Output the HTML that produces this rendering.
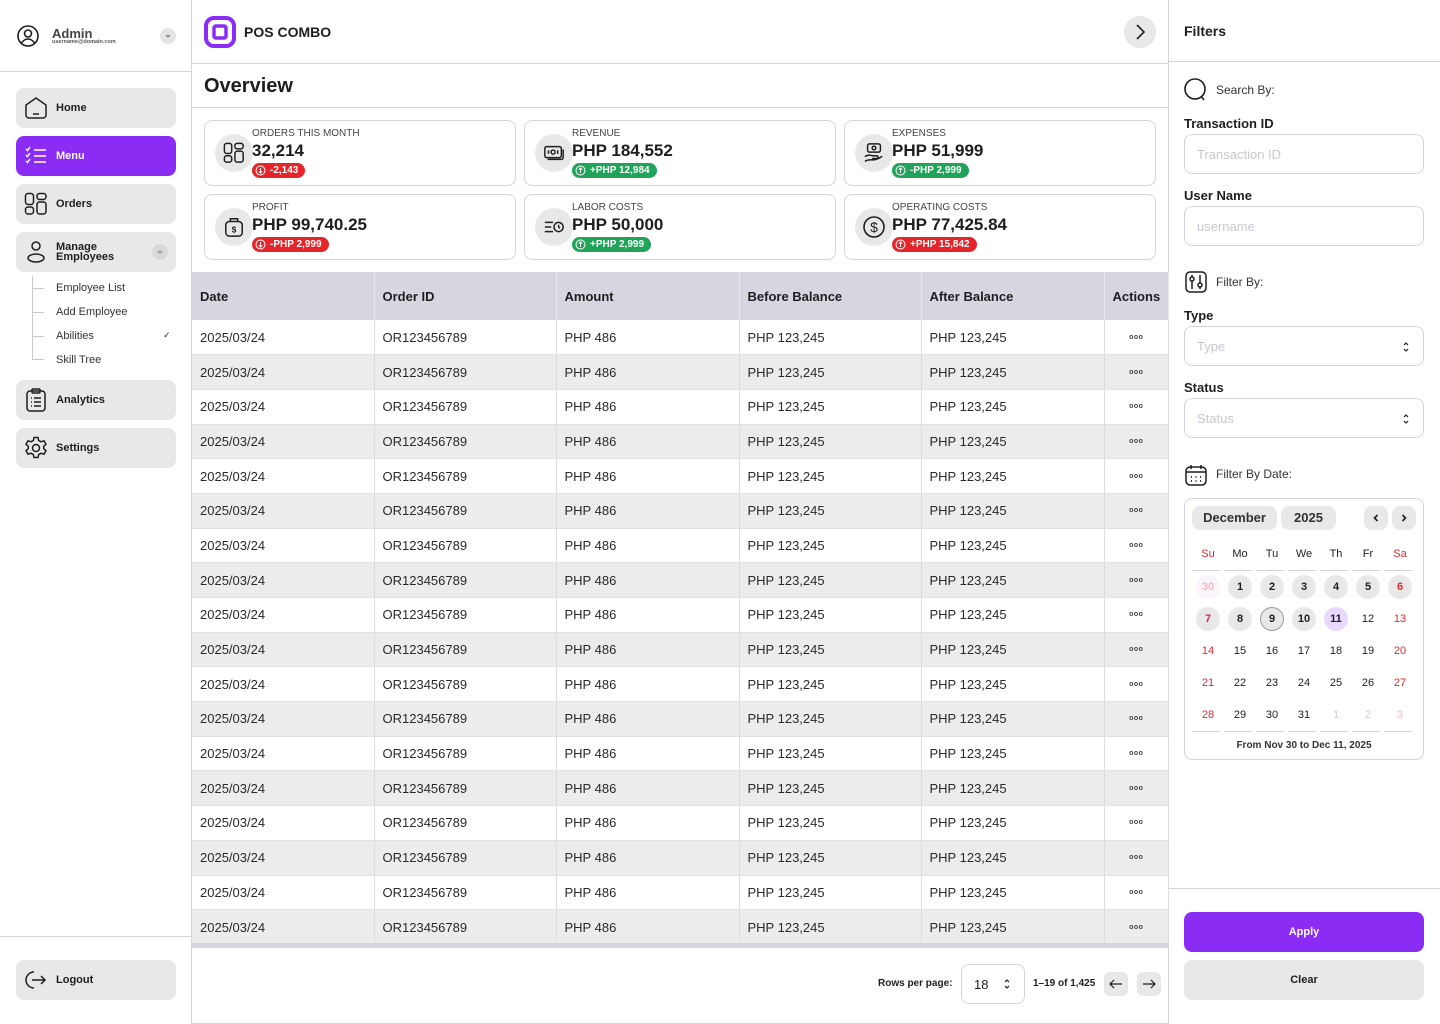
<!DOCTYPE html>
<html><head><meta charset="utf-8"><style>
*{box-sizing:border-box;margin:0;padding:0}
body{width:1440px;height:1024px;position:relative;background:#fff;font-family:"Liberation Sans",Arial,sans-serif;color:#1e1e1e;overflow:hidden}
.a{position:absolute}
.nav{position:absolute;left:16px;width:160px;height:40px;border-radius:8px;background:#e8e8e8;font-size:11px;font-weight:bold;display:flex;align-items:center;padding-left:40px}
.nav svg{position:absolute;left:8px;top:8px}
.sub{position:absolute;left:56px;font-size:11px;color:#333}
.card{position:absolute;width:312px;height:66px;border:1px solid #d4d4dc;border-radius:8px}
.card .ic{position:absolute;left:10px;top:13px;width:38px;height:38px;border-radius:50%;background:#e8e8e8;display:flex;align-items:center;justify-content:center}
.card .l{position:absolute;left:47px;top:7px;font-size:10px;color:#444}
.card .v{position:absolute;left:47px;top:20px;font-size:17px;font-weight:bold;color:#1e1e1e}
.card .b{position:absolute;left:47px;top:42px;height:15px;border-radius:8px;color:#fff;font-size:10px;font-weight:bold;padding:0 7px 0 18px;line-height:15px}
.card .b svg{position:absolute;left:3px;top:2px}
.r{background:#e5252a}.g{background:#1fa45a}
table{position:absolute;left:192px;top:272px;width:977px;border-collapse:collapse;font-size:13px}
th{background:#d6d6e0;height:48px;text-align:left;padding-left:8px;font-weight:bold;border-right:1px solid #e6e6ec}
td{height:34.7px;padding-left:8px;border-right:1px solid #dcdce2;border-bottom:1px solid #e0e0e6;color:#2a2a2a}
tr:nth-child(odd) td{background:#ececec}
td:last-child{text-align:center;padding:0;font-size:7px;letter-spacing:0.5px;font-weight:bold;color:#444}
.lab{position:absolute;left:1184px;font-size:13px;font-weight:bold}
.inp{position:absolute;left:1184px;width:240px;height:40px;border:1px solid #d4d4dc;border-radius:8px;font-size:13px;color:#c8c8d0;padding:12px 12px}
.inp svg{position:absolute;right:12px;top:13px}
.cal div{position:absolute;width:24px;height:24px;border-radius:50%;text-align:center;line-height:24px;font-size:11px;font-weight:bold}
</style></head><body>
<div class="a" style="left:191px;top:0;width:1px;height:1024px;background:#d4d4dc"></div>
<svg class="a" style="left:17px;top:25px" width="22" height="22" viewBox="0 0 22 22" fill="none" stroke="#1e1e1e" stroke-width="1.6"><circle cx="11" cy="11" r="10"/><circle cx="11" cy="8.5" r="3.5"/><path d="M4.5 18c2-3 4-4 6.5-4s4.5 1 6.5 4"/></svg>
<div class="a" style="left:52px;top:26px;font-size:13px;font-weight:bold;color:#444">Admin</div>
<div class="a" style="left:52px;top:39px;font-size:5.5px;font-weight:bold;color:#555">username@domain.com</div>
<div class="a" style="left:160px;top:28px;width:16px;height:16px;border-radius:50%;background:#e4e4e4"><svg width="16" height="16" viewBox="0 0 16 16" fill="none" stroke="#666" stroke-width="1"><path d="M6 7l2 2 2-2"/></svg></div>
<div class="a" style="left:0;top:71px;width:191px;height:1px;background:#d4d4dc"></div>
<div class="nav" style="top:88px"><svg width="24" height="24" viewBox="0 0 24 24" fill="none" stroke="#1e1e1e" stroke-width="1.5"><path d="M2 9L12 2l10 7v10a3 3 0 0 1-3 3H5a3 3 0 0 1-3-3z"/><path d="M9 18h6"/></svg>Home</div>
<div class="nav" style="top:136px;background:#8b2cf5;color:#fff"><svg width="24" height="24" viewBox="0 0 24 24" fill="none" stroke="#fff" stroke-width="1.5"><path d="M2 5l1.5 1.5L6 3M2 11l1.5 1.5L6 9M2 17l1.5 1.5L6 15M10 6h12M10 12h12M10 18h12"/></svg>Menu</div>
<div class="nav" style="top:184px"><svg width="24" height="24" viewBox="0 0 24 24" fill="none" stroke="#1e1e1e" stroke-width="1.5"><rect x="1.5" y="1.5" width="8" height="11" rx="2.5"/><rect x="1.5" y="15" width="8" height="7" rx="2.5"/><rect x="13" y="1.5" width="9" height="6" rx="2.5"/><rect x="13" y="10" width="9" height="12" rx="2.5"/></svg>Orders</div>
<div class="nav" style="top:232px;line-height:10px">
<svg width="24" height="24" viewBox="0 0 24 24" fill="none" stroke="#1e1e1e" stroke-width="1.5"><circle cx="12" cy="6" r="4"/><ellipse cx="12" cy="18" rx="8" ry="4"/></svg>Manage<br>Employees
<div class="a" style="left:136px;top:12px;width:16px;height:16px;border-radius:50%;background:#d8d8d8"><svg style="left:0;top:0" width="16" height="16" viewBox="0 0 16 16" fill="none" stroke="#777" stroke-width="1"><path d="M6 9l2-2 2 2"/></svg></div></div>
<div class="a" style="left:32px;top:276px;width:1px;height:84px;background:#c8c8d0"></div>
<div class="a" style="left:32px;top:288px;width:12px;height:1px;background:#c8c8d0"></div>
<div class="a" style="left:32px;top:312px;width:12px;height:1px;background:#c8c8d0"></div>
<div class="a" style="left:32px;top:336px;width:12px;height:1px;background:#c8c8d0"></div>
<div class="a" style="left:32px;top:359px;width:12px;height:1px;background:#c8c8d0"></div>
<div class="sub" style="top:282px">Employee List</div>
<div class="sub" style="top:306px">Add Employee</div>
<div class="sub" style="top:330px">Abilities</div>
<div class="a" style="left:163px;top:330px;font-size:9px">✓</div>
<div class="sub" style="top:354px">Skill Tree</div>
<div class="nav" style="top:380px"><svg width="24" height="24" viewBox="0 0 24 24" fill="none" stroke="#1e1e1e" stroke-width="1.5"><rect x="3" y="3" width="18" height="20" rx="3"/><rect x="8" y="1" width="8" height="4" rx="1"/><path d="M7 10h1M7 14h1M7 18h1M10 10h7M10 14h7M10 18h7"/></svg>Analytics</div>
<div class="nav" style="top:428px"><svg width="24" height="24" viewBox="0 0 24 24" fill="none" stroke="#1e1e1e" stroke-width="1.5"><circle cx="12" cy="12" r="3.5"/><path d="M10 1.5h4l.7 3 2.3 1.3 3-1 2 3.5-2.3 2v2.4l2.3 2-2 3.5-3-1-2.3 1.3-.7 3h-4l-.7-3-2.3-1.3-3 1-2-3.5 2.3-2v-2.4l-2.3-2 2-3.5 3 1 2.3-1.3z"/></svg>Settings</div>
<div class="a" style="left:0;top:936px;width:191px;height:1px;background:#d4d4dc"></div>
<div class="nav" style="top:960px;font-weight:bold"><svg width="24" height="24" viewBox="0 0 24 24" fill="none" stroke="#1e1e1e" stroke-width="1.5"><path d="M10 4a8 8 0 1 0 0 16"/><path d="M8 12h13M17 8l4 4-4 4"/></svg>Logout</div>

<svg class="a" style="left:204px;top:16px" width="32" height="32" viewBox="0 0 32 32"><rect x="2" y="2" width="28" height="28" rx="8" fill="none" stroke="#8b2cf5" stroke-width="4"/><rect x="10" y="10" width="12" height="12" rx="2" fill="none" stroke="#8b2cf5" stroke-width="3.5"/></svg>
<div class="a" style="left:244px;top:24px;font-size:14px;font-weight:bold">POS COMBO</div>
<div class="a" style="left:1124px;top:16px;width:32px;height:32px;border-radius:50%;background:#e8e8e8"><svg width="32" height="32" viewBox="0 0 32 32" fill="none" stroke="#1e1e1e" stroke-width="1.6"><path d="M13 9l7 7-7 7"/></svg></div>
<div class="a" style="left:192px;top:63px;width:977px;height:1px;background:#d4d4dc"></div>
<div class="a" style="left:204px;top:75px;font-size:20px;font-weight:bold">Overview</div>
<div class="a" style="left:192px;top:107px;width:977px;height:1px;background:#d4d4dc"></div>
<div class="a" style="left:1168px;top:0;width:1px;height:1024px;background:#d4d4dc"></div>

<div class="card" style="left:204px;top:120px"><div class="ic"><svg width="22" height="22" viewBox="0 0 24 24" fill="none" stroke="#1e1e1e" stroke-width="1.6"><rect x="1.5" y="1.5" width="8" height="11" rx="2.5"/><rect x="1.5" y="15" width="8" height="7" rx="2.5"/><rect x="13" y="1.5" width="9" height="6" rx="2.5"/><rect x="13" y="10" width="9" height="12" rx="2.5"/></svg></div><div class="l">ORDERS THIS MONTH</div><div class="v">32,214</div><div class="b r"><svg width="11" height="11" viewBox="0 0 11 11" fill="none" stroke="#fff" stroke-width="1"><circle cx="5.5" cy="5.5" r="4.5"/><path d="M5.5 3v5M3.8 6.3l1.7 1.7 1.7-1.7"/></svg>-2,143</div></div>
<div class="card" style="left:524px;top:120px"><div class="ic"><svg width="22" height="22" viewBox="0 0 24 24" fill="none" stroke="#1e1e1e" stroke-width="1.6"><rect x="2" y="5" width="18" height="12" rx="2"/><path d="M5 19h15a2 2 0 0 0 2-2V8"/><circle cx="11" cy="11" r="2.2"/><path d="M6 9v4M16 9v4"/></svg></div><div class="l">REVENUE</div><div class="v">PHP 184,552</div><div class="b g"><svg width="11" height="11" viewBox="0 0 11 11" fill="none" stroke="#fff" stroke-width="1"><circle cx="5.5" cy="5.5" r="4.5"/><path d="M5.5 8V3M3.8 4.7l1.7-1.7 1.7 1.7"/></svg>+PHP 12,984</div></div>
<div class="card" style="left:844px;top:120px"><div class="ic"><svg width="22" height="22" viewBox="0 0 24 24" fill="none" stroke="#1e1e1e" stroke-width="1.6"><rect x="5" y="2" width="14" height="9" rx="2"/><circle cx="12" cy="6.5" r="2"/><path d="M2 16c3-2 6-2 8-1h5a1.5 1.5 0 0 1 0 3H10M2 21c3-1.5 5-2 8-1.5 4 .5 7-1 11-4"/></svg></div><div class="l">EXPENSES</div><div class="v">PHP 51,999</div><div class="b g"><svg width="11" height="11" viewBox="0 0 11 11" fill="none" stroke="#fff" stroke-width="1"><circle cx="5.5" cy="5.5" r="4.5"/><path d="M5.5 8V3M3.8 4.7l1.7-1.7 1.7 1.7"/></svg>-PHP 2,999</div></div>
<div class="card" style="left:204px;top:194px"><div class="ic"><svg width="22" height="22" viewBox="0 0 24 24" fill="none" stroke="#1e1e1e" stroke-width="1.6"><rect x="3" y="6" width="18" height="16" rx="4"/><path d="M8 6V3h8v3"/><text x="12" y="18" font-size="9" text-anchor="middle" fill="#1e1e1e" stroke="none" font-family="Liberation Sans" font-weight="bold">$</text></svg></div><div class="l">PROFIT</div><div class="v">PHP 99,740.25</div><div class="b r"><svg width="11" height="11" viewBox="0 0 11 11" fill="none" stroke="#fff" stroke-width="1"><circle cx="5.5" cy="5.5" r="4.5"/><path d="M5.5 3v5M3.8 6.3l1.7 1.7 1.7-1.7"/></svg>-PHP 2,999</div></div>
<div class="card" style="left:524px;top:194px"><div class="ic"><svg width="22" height="22" viewBox="0 0 24 24" fill="none" stroke="#1e1e1e" stroke-width="1.6"><path d="M2 7h9M2 12h7M2 17h9"/><circle cx="17" cy="12" r="5"/><path d="M17 9.5V12l1.5 1.5"/></svg></div><div class="l">LABOR COSTS</div><div class="v">PHP 50,000</div><div class="b g"><svg width="11" height="11" viewBox="0 0 11 11" fill="none" stroke="#fff" stroke-width="1"><circle cx="5.5" cy="5.5" r="4.5"/><path d="M5.5 8V3M3.8 4.7l1.7-1.7 1.7 1.7"/></svg>+PHP 2,999</div></div>
<div class="card" style="left:844px;top:194px"><div class="ic"><svg width="24" height="24" viewBox="0 0 24 24" fill="none" stroke="#1e1e1e" stroke-width="1.6"><circle cx="12" cy="12" r="10"/><text x="12" y="17" font-size="14" text-anchor="middle" fill="#1e1e1e" stroke="none" font-family="Liberation Sans">$</text></svg></div><div class="l">OPERATING COSTS</div><div class="v">PHP 77,425.84</div><div class="b r"><svg width="11" height="11" viewBox="0 0 11 11" fill="none" stroke="#fff" stroke-width="1"><circle cx="5.5" cy="5.5" r="4.5"/><path d="M5.5 8V3M3.8 4.7l1.7-1.7 1.7 1.7"/></svg>+PHP 15,842</div></div>

<table>
<tr><th style="width:182px">Date</th><th style="width:182px">Order ID</th><th style="width:183px">Amount</th><th style="width:182px">Before Balance</th><th style="width:183px">After Balance</th><th>Actions</th></tr>
<tr><td>2025/03/24</td><td>OR123456789</td><td>PHP 486</td><td>PHP 123,245</td><td>PHP 123,245</td><td>ooo</td></tr>
<tr><td>2025/03/24</td><td>OR123456789</td><td>PHP 486</td><td>PHP 123,245</td><td>PHP 123,245</td><td>ooo</td></tr>
<tr><td>2025/03/24</td><td>OR123456789</td><td>PHP 486</td><td>PHP 123,245</td><td>PHP 123,245</td><td>ooo</td></tr>
<tr><td>2025/03/24</td><td>OR123456789</td><td>PHP 486</td><td>PHP 123,245</td><td>PHP 123,245</td><td>ooo</td></tr>
<tr><td>2025/03/24</td><td>OR123456789</td><td>PHP 486</td><td>PHP 123,245</td><td>PHP 123,245</td><td>ooo</td></tr>
<tr><td>2025/03/24</td><td>OR123456789</td><td>PHP 486</td><td>PHP 123,245</td><td>PHP 123,245</td><td>ooo</td></tr>
<tr><td>2025/03/24</td><td>OR123456789</td><td>PHP 486</td><td>PHP 123,245</td><td>PHP 123,245</td><td>ooo</td></tr>
<tr><td>2025/03/24</td><td>OR123456789</td><td>PHP 486</td><td>PHP 123,245</td><td>PHP 123,245</td><td>ooo</td></tr>
<tr><td>2025/03/24</td><td>OR123456789</td><td>PHP 486</td><td>PHP 123,245</td><td>PHP 123,245</td><td>ooo</td></tr>
<tr><td>2025/03/24</td><td>OR123456789</td><td>PHP 486</td><td>PHP 123,245</td><td>PHP 123,245</td><td>ooo</td></tr>
<tr><td>2025/03/24</td><td>OR123456789</td><td>PHP 486</td><td>PHP 123,245</td><td>PHP 123,245</td><td>ooo</td></tr>
<tr><td>2025/03/24</td><td>OR123456789</td><td>PHP 486</td><td>PHP 123,245</td><td>PHP 123,245</td><td>ooo</td></tr>
<tr><td>2025/03/24</td><td>OR123456789</td><td>PHP 486</td><td>PHP 123,245</td><td>PHP 123,245</td><td>ooo</td></tr>
<tr><td>2025/03/24</td><td>OR123456789</td><td>PHP 486</td><td>PHP 123,245</td><td>PHP 123,245</td><td>ooo</td></tr>
<tr><td>2025/03/24</td><td>OR123456789</td><td>PHP 486</td><td>PHP 123,245</td><td>PHP 123,245</td><td>ooo</td></tr>
<tr><td>2025/03/24</td><td>OR123456789</td><td>PHP 486</td><td>PHP 123,245</td><td>PHP 123,245</td><td>ooo</td></tr>
<tr><td>2025/03/24</td><td>OR123456789</td><td>PHP 486</td><td>PHP 123,245</td><td>PHP 123,245</td><td>ooo</td></tr>
<tr><td>2025/03/24</td><td>OR123456789</td><td>PHP 486</td><td>PHP 123,245</td><td>PHP 123,245</td><td>ooo</td></tr>
</table>
<div class="a" style="left:192px;top:943px;width:977px;height:5px;background:#d6d6e0"></div>
<div class="a" style="left:878px;top:978px;font-size:10px;font-weight:bold">Rows per page:</div>
<div class="a" style="left:961px;top:964px;width:64px;height:40px;border:1px solid #d4d4dc;border-radius:8px;font-size:13px;padding:12px 0 0 12px">18<svg style="position:absolute;left:40px;top:12px" width="10" height="14" viewBox="0 0 10 14" fill="none" stroke="#1e1e1e" stroke-width="1.2"><path d="M3 5l2-2 2 2M3 9l2 2 2-2"/></svg></div>
<div class="a" style="left:1033px;top:978px;font-size:10px;font-weight:bold">1–19 of 1,425</div>
<div class="a" style="left:1104px;top:972px;width:24px;height:24px;border-radius:6px;background:#e8e8e8"><svg width="24" height="24" viewBox="0 0 24 24" fill="none" stroke="#1e1e1e" stroke-width="1.2"><path d="M18 12H6M10 8l-4 4 4 4"/></svg></div>
<div class="a" style="left:1137px;top:972px;width:24px;height:24px;border-radius:6px;background:#e8e8e8"><svg width="24" height="24" viewBox="0 0 24 24" fill="none" stroke="#1e1e1e" stroke-width="1.2"><path d="M6 12h12M14 8l4 4-4 4"/></svg></div>
<div class="a" style="left:192px;top:1023px;width:977px;height:1px;background:#d4d4dc"></div>

<div class="a" style="left:1184px;top:23px;font-size:14px;font-weight:bold">Filters</div>
<div class="a" style="left:1169px;top:61px;width:271px;height:1px;background:#d4d4dc"></div>
<svg class="a" style="left:1184px;top:78px" width="24" height="24" viewBox="0 0 24 24" fill="none" stroke="#1e1e1e" stroke-width="1.6"><circle cx="11" cy="11" r="10"/><path d="M17 18l3 4"/></svg>
<div class="a" style="left:1216px;top:83px;font-size:12px;color:#333">Search By:</div>
<div class="lab" style="top:116px">Transaction ID</div>
<div class="inp" style="top:134px">Transaction ID</div>
<div class="lab" style="top:188px">User Name</div>
<div class="inp" style="top:206px">username</div>
<svg class="a" style="left:1185px;top:271px" width="22" height="22" viewBox="0 0 22 22" fill="none" stroke="#1e1e1e" stroke-width="1.5"><rect x="1" y="1" width="20" height="20" rx="4"/><path d="M7 4v14M15 4v14"/><circle cx="7" cy="8" r="2" fill="#fff"/><circle cx="15" cy="14" r="2" fill="#fff"/></svg>
<div class="a" style="left:1216px;top:275px;font-size:12px;color:#333">Filter By:</div>
<div class="lab" style="top:308px">Type</div>
<div class="inp" style="top:326px">Type<svg width="10" height="14" viewBox="0 0 10 14" fill="none" stroke="#1e1e1e" stroke-width="1.2"><path d="M3 5l2-2 2 2M3 9l2 2 2-2"/></svg></div>
<div class="lab" style="top:380px">Status</div>
<div class="inp" style="top:398px">Status<svg width="10" height="14" viewBox="0 0 10 14" fill="none" stroke="#1e1e1e" stroke-width="1.2"><path d="M3 5l2-2 2 2M3 9l2 2 2-2"/></svg></div>
<svg class="a" style="left:1185px;top:464px" width="22" height="22" viewBox="0 0 22 22" fill="none" stroke="#1e1e1e" stroke-width="1.5"><rect x="1" y="3" width="20" height="18" rx="4"/><path d="M1 8h20M6 1v4M16 1v4"/><path d="M6 13h1M10.5 13h1M15 13h1M6 17h1M10.5 17h1M15 17h1" stroke-width="1.8"/></svg>
<div class="a" style="left:1216px;top:467px;font-size:12px;color:#333">Filter By Date:</div>

<div class="a" style="left:1184px;top:498px;width:240px;height:262px;border:1px solid #d4d4dc;border-radius:8px"></div>
<div class="a" style="left:1192px;top:506px;width:85px;height:24px;border-radius:8px;background:#e8e8e8;font-size:13px;font-weight:bold;text-align:center;line-height:24px;color:#333">December</div>
<div class="a" style="left:1281px;top:506px;width:55px;height:24px;border-radius:8px;background:#e8e8e8;font-size:13px;font-weight:bold;text-align:center;line-height:24px;color:#333">2025</div>
<div class="a" style="left:1364px;top:506px;width:24px;height:24px;border-radius:8px;background:#e8e8e8"><svg width="24" height="24" viewBox="0 0 24 24" fill="none" stroke="#1e1e1e" stroke-width="1.6"><path d="M13.5 9l-3 3 3 3"/></svg></div>
<div class="a" style="left:1392px;top:506px;width:24px;height:24px;border-radius:8px;background:#e8e8e8"><svg width="24" height="24" viewBox="0 0 24 24" fill="none" stroke="#1e1e1e" stroke-width="1.6"><path d="M10.5 9l3 3-3 3"/></svg></div>
<div class="cal" style="position:absolute;left:0;top:0">
<div style="left:1196px;top:542px;color:#e5252a;font-weight:normal">Su</div><div style="left:1228px;top:542px;font-weight:normal">Mo</div><div style="left:1260px;top:542px;font-weight:normal">Tu</div><div style="left:1292px;top:542px;font-weight:normal">We</div><div style="left:1324px;top:542px;font-weight:normal">Th</div><div style="left:1356px;top:542px;font-weight:normal">Fr</div><div style="left:1388px;top:542px;color:#e5252a;font-weight:normal">Sa</div>
<div style="left:1196px;top:575px;background:#fbf5fb;color:#f5b8bc">30</div><div style="left:1228px;top:575px;background:#e8e8e8">1</div><div style="left:1260px;top:575px;background:#e8e8e8">2</div><div style="left:1292px;top:575px;background:#e8e8e8">3</div><div style="left:1324px;top:575px;background:#e8e8e8">4</div><div style="left:1356px;top:575px;background:#e8e8e8">5</div><div style="left:1388px;top:575px;background:#e8e8e8;color:#e5252a">6</div>
<div style="left:1196px;top:607px;background:#e8e8e8;color:#e5252a">7</div><div style="left:1228px;top:607px;background:#e8e8e8">8</div><div style="left:1260px;top:607px;background:#e8e8e8;border:1px solid #999;line-height:22px">9</div><div style="left:1292px;top:607px;background:#e8e8e8">10</div><div style="left:1324px;top:607px;background:#e8d8fc">11</div><div style="left:1356px;top:607px;font-weight:normal">12</div><div style="left:1388px;top:607px;color:#e5252a;font-weight:normal">13</div>
<div style="left:1196px;top:639px;color:#e5252a;font-weight:normal">14</div><div style="left:1228px;top:639px;font-weight:normal">15</div><div style="left:1260px;top:639px;font-weight:normal">16</div><div style="left:1292px;top:639px;font-weight:normal">17</div><div style="left:1324px;top:639px;font-weight:normal">18</div><div style="left:1356px;top:639px;font-weight:normal">19</div><div style="left:1388px;top:639px;color:#e5252a;font-weight:normal">20</div>
<div style="left:1196px;top:671px;color:#e5252a;font-weight:normal">21</div><div style="left:1228px;top:671px;font-weight:normal">22</div><div style="left:1260px;top:671px;font-weight:normal">23</div><div style="left:1292px;top:671px;font-weight:normal">24</div><div style="left:1324px;top:671px;font-weight:normal">25</div><div style="left:1356px;top:671px;font-weight:normal">26</div><div style="left:1388px;top:671px;color:#e5252a;font-weight:normal">27</div>
<div style="left:1196px;top:703px;color:#e5252a;font-weight:normal">28</div><div style="left:1228px;top:703px;font-weight:normal">29</div><div style="left:1260px;top:703px;font-weight:normal">30</div><div style="left:1292px;top:703px;font-weight:normal">31</div><div style="left:1324px;top:703px;font-weight:normal;color:#ccc">1</div><div style="left:1356px;top:703px;font-weight:normal;color:#ccc">2</div><div style="left:1388px;top:703px;color:#f5b8bc;font-weight:normal">3</div>
</div>
<div class="a" style="left:1192px;top:570px;width:224px;height:1px;background:repeating-linear-gradient(90deg,#d4d4dc 0 29px,transparent 29px 32px)"></div>
<div class="a" style="left:1192px;top:731px;width:224px;height:1px;background:repeating-linear-gradient(90deg,#d4d4dc 0 29px,transparent 29px 32px)"></div>
<div class="a" style="left:1184px;top:740px;width:240px;text-align:center;font-size:10px;font-weight:bold;color:#333">From Nov 30 to Dec 11, 2025</div>

<div class="a" style="left:1169px;top:888px;width:271px;height:1px;background:#d4d4dc"></div>
<div class="a" style="left:1184px;top:912px;width:240px;height:40px;border-radius:8px;background:#8b2cf5;color:#fff;font-size:11px;font-weight:bold;text-align:center;line-height:40px">Apply</div>
<div class="a" style="left:1184px;top:960px;width:240px;height:40px;border-radius:8px;background:#e8e8e8;font-size:11px;font-weight:bold;text-align:center;line-height:40px">Clear</div>
</body></html>
